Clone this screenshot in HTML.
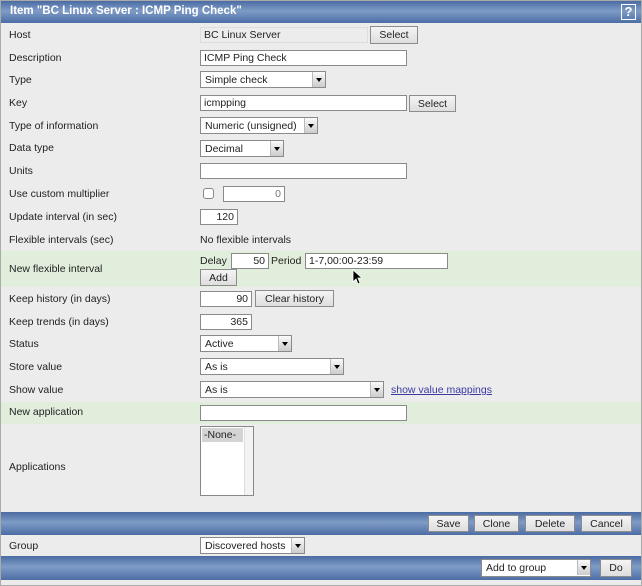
<!DOCTYPE html>
<html><head><meta charset="utf-8"><style>
*{margin:0;padding:0;box-sizing:border-box}
body{width:642px;height:586px;background:#fff;font-family:"Liberation Sans","DejaVu Sans",sans-serif;font-size:10.5px;color:#222;position:relative;overflow:hidden}
.frame{position:absolute;left:0;top:0;width:642px;height:586px;background:#ececec;border:1px solid #aaa}
.bar{position:absolute;left:1px;width:640px;background:linear-gradient(#4a6ba3,#7f9cc6 45%,#4c6da5);}
.title{position:absolute;left:9px;top:4px;color:#fff;font-weight:bold;font-size:11.5px;font-family:"Liberation Sans",sans-serif}
.help{position:absolute;right:5px;top:3px;width:15px;height:16px;border:1px solid #fff;color:#fff;font-weight:bold;font-size:13px;text-align:center;line-height:14px}
.green{position:absolute;left:1px;width:640px;background:#e1eedc}
.l{position:absolute;left:9px}
.a{position:absolute}
.in{position:absolute;height:16px;background:#fff;border:1px solid #8a8a8a;padding:1px 3px;line-height:13px;font-size:10.5px}
.r{text-align:right}
.sel{position:absolute;height:17px;background:#fff;border:1px solid #8a8a8a;padding:1px 4px;line-height:14px}
.sel:after{content:"";position:absolute;right:0;top:0;width:12px;height:15px;background:linear-gradient(#fafafa,#ccc);border-left:1px solid #bbb}
.sel:before{content:"";position:absolute;right:3px;top:6px;width:0;height:0;border-left:3px solid transparent;border-right:3px solid transparent;border-top:4px solid #000;z-index:1}
.btn{position:absolute;height:17px;background:linear-gradient(#f4f4f4,#dedede);border:1px solid #8c8c8c;text-align:center;line-height:16px;font-size:10.5px}
</style></head><body>
<div class="frame"></div>
<div class="bar" style="top:1px;height:22px"><div class="title">Item "BC Linux Server : ICMP Ping Check"</div><div class="help">?</div></div>

<div class="l" style="top:29px">Host</div>
<div class="in" style="left:200px;top:27px;width:168px;background:#ececec;border-color:#ddd">BC Linux Server</div>
<div class="btn" style="left:370px;top:26px;width:48px;height:18px">Select</div>

<div class="l" style="top:52px">Description</div>
<div class="in" style="left:200px;top:50px;width:207px">ICMP Ping Check</div>

<div class="l" style="top:74px">Type</div>
<div class="sel" style="left:200px;top:71px;width:126px">Simple check</div>

<div class="l" style="top:97px">Key</div>
<div class="in" style="left:200px;top:95px;width:207px">icmpping</div>
<div class="btn" style="left:409px;top:95px;width:47px">Select</div>

<div class="l" style="top:120px">Type of information</div>
<div class="sel" style="left:200px;top:117px;width:118px">Numeric (unsigned)</div>

<div class="l" style="top:142px">Data type</div>
<div class="sel" style="left:200px;top:140px;width:84px">Decimal</div>

<div class="l" style="top:165px">Units</div>
<div class="in" style="left:200px;top:163px;width:207px"></div>

<div class="l" style="top:188px">Use custom multiplier</div>
<div class="a" style="left:203px;top:188px;width:11px;height:11px;border:1px solid #888;border-radius:3px;background:#fff"></div>
<div class="in r" style="left:223px;top:186px;width:62px;color:#777">0</div>

<div class="l" style="top:211px">Update interval (in sec)</div>
<div class="in r" style="left:200px;top:209px;width:38px">120</div>

<div class="l" style="top:234px">Flexible intervals (sec)</div>
<div class="a" style="left:200px;top:234px">No flexible intervals</div>

<div class="green" style="top:251px;height:36px"></div>
<div class="l" style="top:263px">New flexible interval</div>
<div class="a" style="left:200px;top:255px">Delay</div>
<div class="in r" style="left:231px;top:253px;width:38px">50</div>
<div class="a" style="left:271px;top:255px">Period</div>
<div class="in" style="left:305px;top:253px;width:143px">1-7,00:00-23:59</div>
<svg class="a" style="left:352px;top:269px" width="10" height="16" viewBox="0 0 10 16"><path d="M1 1 L1 13 L4 10 L6 15 L8 14 L6 9 L10 9 Z" fill="#000" stroke="#fff" stroke-width="0.8"/></svg>
<div class="btn" style="left:200px;top:269px;width:37px">Add</div>

<div class="l" style="top:293px">Keep history (in days)</div>
<div class="in r" style="left:200px;top:291px;width:52px">90</div>
<div class="btn" style="left:255px;top:290px;width:79px">Clear history</div>

<div class="l" style="top:316px">Keep trends (in days)</div>
<div class="in r" style="left:200px;top:314px;width:52px">365</div>

<div class="l" style="top:338px">Status</div>
<div class="sel" style="left:200px;top:335px;width:92px">Active</div>

<div class="l" style="top:361px">Store value</div>
<div class="sel" style="left:200px;top:358px;width:144px">As is</div>

<div class="l" style="top:384px">Show value</div>
<div class="sel" style="left:200px;top:381px;width:184px">As is</div>
<div class="a" style="left:391px;top:384px;color:#3a3aa0;text-decoration:underline">show value mappings</div>

<div class="green" style="top:402px;height:22px"></div>
<div class="l" style="top:406px">New application</div>
<div class="in" style="left:200px;top:405px;width:207px"></div>

<div class="l" style="top:461px">Applications</div>
<div class="a" style="left:200px;top:426px;width:54px;height:70px;background:#fff;border:1px solid #888"><div style="position:absolute;right:0;top:0;width:9px;height:68px;background:#f3f3f3;border-left:1px solid #ddd"></div><div style="margin:1px;width:41px;background:#d4d4d4;padding:1px 2px">-None-</div></div>

<div class="bar" style="top:512px;height:23px"></div>
<div class="btn" style="left:428px;top:515px;width:41px">Save</div>
<div class="btn" style="left:474px;top:515px;width:45px">Clone</div>
<div class="btn" style="left:525px;top:515px;width:50px">Delete</div>
<div class="btn" style="left:581px;top:515px;width:51px">Cancel</div>

<div class="l" style="top:540px">Group</div>
<div class="sel" style="left:200px;top:537px;width:105px">Discovered hosts</div>

<div class="bar" style="top:556px;height:24px"></div>
<div class="sel" style="left:481px;top:559px;width:110px;height:18px">Add to group</div>
<div class="btn" style="left:600px;top:559px;width:32px;height:18px">Do</div>
</body></html>
